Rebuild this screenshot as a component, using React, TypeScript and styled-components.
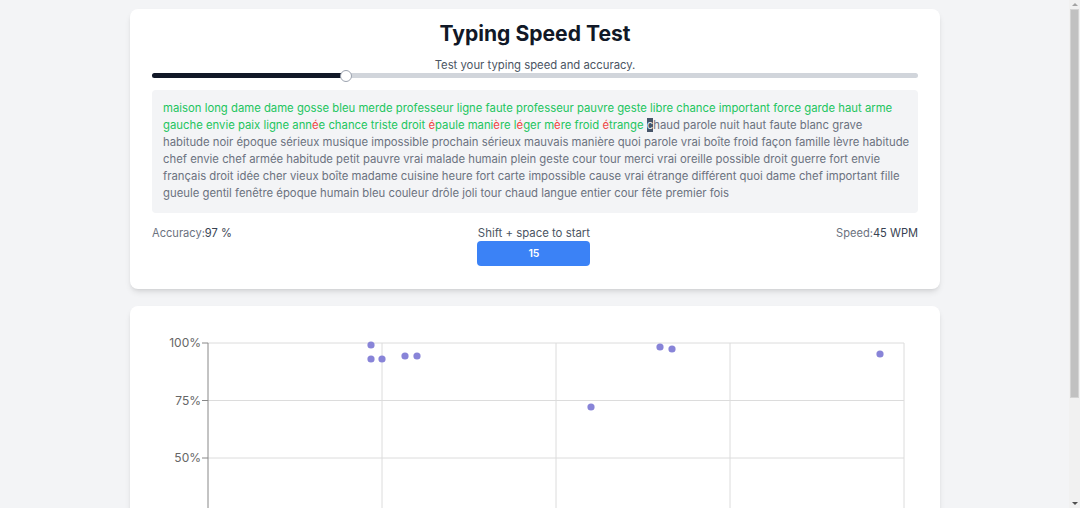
import React from 'react';
import styled, { createGlobalStyle } from 'styled-components';

const GlobalStyle = createGlobalStyle`
  html, body {
    margin: 0;
    padding: 0;
    background: #f3f4f6;
    font-family: Inter, "Liberation Sans", sans-serif;
  }
  ::-webkit-scrollbar {
    display: none;
  }
`;

const LINES = [
  'maison long dame dame gosse bleu merde professeur ligne faute professeur pauvre geste libre chance important force garde haut arme',
  'gauche envie paix ligne année chance triste droit épaule manière léger mère froid étrange chaud parole nuit haut faute blanc grave',
  'habitude noir époque sérieux musique impossible prochain sérieux mauvais manière quoi parole vrai boîte froid façon famille lèvre habitude',
  'chef envie chef armée habitude petit pauvre vrai malade humain plein geste cour tour merci vrai oreille possible droit guerre fort envie',
  'français droit idée cher vieux boîte madame cuisine heure fort carte impossible cause vrai étrange différent quoi dame chef important fille',
  'gueule gentil fenêtre époque humain bleu couleur drôle joli tour chaud langue entier cour fête premier fois',
];

// characters typed so far: everything up to "chaud" on line two
const TYPED = LINES[0].length + 1 + LINES[1].indexOf('chaud');
const ACCENTS = 'éèêàâçîôû';

const points = [
  { x: 371, y: 345 },
  { x: 371, y: 359 },
  { x: 382, y: 359 },
  { x: 405, y: 356 },
  { x: 417, y: 356 },
  { x: 591, y: 407 },
  { x: 660, y: 347 },
  { x: 672, y: 349 },
  { x: 880, y: 354 },
];

export default function App() {
  let offset = 0;
  return (
    <>
      <GlobalStyle />
      <Page>
        <Card>
          <Title>Typing Speed Test</Title>
          <Subtitle>Test your typing speed and accuracy.</Subtitle>
          <Track>
            <Fill style={{ width: '25.3%' }} />
            <Thumb style={{ left: '25.3%' }} />
          </Track>
          <TextBox>
            {LINES.map((line, li) => {
              const start = offset;
              offset += line.length + 1;
              return (
                <Line key={li}>
                  {line.split('').map((ch, ci) => {
                    const i = start + ci;
                    if (i === TYPED) return <Cursor key={ci}>{ch}</Cursor>;
                    const state = i < TYPED ? (ACCENTS.includes(ch) ? 'wrong' : 'right') : 'idle';
                    return (
                      <Char key={ci} $state={state}>
                        {ch}
                      </Char>
                    );
                  })}
                </Line>
              );
            })}
          </TextBox>
          <Stats>
            <Stat>
              Accuracy:<Value>97 %</Value>
            </Stat>
            <Center>
              <Hint>Shift + space to start</Hint>
              <TimerButton>15</TimerButton>
            </Center>
            <Stat>
              Speed:<Value>45 WPM</Value>
            </Stat>
          </Stats>
        </Card>
        <ChartCard>
          <Chart />
        </ChartCard>
      </Page>
      <Scrollbar>
        <ArrowUp />
        <ScrollThumb />
        <ArrowDown />
      </Scrollbar>
    </>
  );
}

function Chart() {
  // page coords of the plot, shifted into the svg's own box
  const ox = 152;
  const oy = 328;
  const left = 208 - ox;
  const right = 904 - ox;
  const top = 343 - oy;
  const step = 57.5;
  const bottom = top + step * 4;
  const cols = [382, 556, 730, 904].map((x) => x - ox);
  const rows = [0, 1, 2, 3].map((k) => top + k * step);
  const labels = ['100%', '75%', '50%', '25%'];
  const xLabels = ['0', '5', '10', '15', '20'];
  return (
    <svg width="766" height="282" viewBox="0 0 766 282">
      {rows.map((y) => (
        <line key={y} x1={left} x2={right} y1={y} y2={y} stroke="#dcdcdc" />
      ))}
      {cols.map((x) => (
        <line key={x} x1={x} x2={x} y1={top} y2={bottom} stroke="#dcdcdc" />
      ))}
      <line x1={left} x2={left} y1={top} y2={bottom} stroke="#888" />
      <line x1={left} x2={right} y1={bottom} y2={bottom} stroke="#888" />
      {rows.map((y, i) => (
        <g key={i}>
          <line x1={left - 6} x2={left} y1={y} y2={y} stroke="#888" />
          <text x={left - 7} y={y + 4} textAnchor="end" fontSize="12" fill="#666" fontFamily="Inter, sans-serif">
            {labels[i]}
          </text>
        </g>
      ))}
      {[left, ...cols].map((x, i) => (
        <g key={x}>
          <line x1={x} x2={x} y1={bottom} y2={bottom + 6} stroke="#888" />
          <text x={x} y={bottom + 20} textAnchor="middle" fontSize="12" fill="#666" fontFamily="Inter, sans-serif">
            {xLabels[i]}
          </text>
        </g>
      ))}
      {points.map((p, i) => (
        <circle key={i} cx={p.x - ox} cy={p.y - oy} r="3.6" fill="#8884d8" />
      ))}
    </svg>
  );
}

const Page = styled.div`
  padding: 9px 10px 9px 0;
  display: flex;
  flex-direction: column;
  align-items: center;
  gap: 17px;
`;

const Card = styled.div`
  width: 810px;
  box-sizing: border-box;
  background: #ffffff;
  border-radius: 8px;
  box-shadow: 0 4px 6px -1px rgba(0, 0, 0, 0.1), 0 2px 4px -2px rgba(0, 0, 0, 0.1);
  padding: 11px 22px 23px;
  display: flex;
  flex-direction: column;
`;

const ChartCard = styled(Card)`
  padding: 22px;
`;

const Title = styled.h1`
  margin: 0;
  font-size: 21.1px;
  line-height: 28px;
  font-weight: 700;
  color: #111827;
  text-align: center;
`;

const Subtitle = styled.p`
  margin: 10px 0 0;
  font-size: 11.3px;
  line-height: 14px;
  color: #4b5563;
  text-align: center;
`;

const Track = styled.div`
  position: relative;
  height: 5px;
  margin-top: 1px;
  border-radius: 3px;
  background: #d1d5db;
`;

const Fill = styled.div`
  height: 100%;
  border-radius: 3px;
  background: #111827;
`;

const Thumb = styled.div`
  position: absolute;
  top: 50%;
  width: 10px;
  height: 10px;
  margin: -6px 0 0 -6px;
  border-radius: 50%;
  background: #ffffff;
  border: 1px solid #9ca3af;
`;

const TextBox = styled.div`
  margin-top: 12px;
  padding: 10px 11px 11px;
  background: #f3f4f6;
  border-radius: 4px;
  font-size: 11.3px;
  line-height: 17px;
  color: #6b7280;
`;

const Line = styled.div`
  white-space: nowrap;
`;

const Char = styled.span<{ $state: 'right' | 'wrong' | 'idle' }>`
  color: ${(p) => (p.$state === 'right' ? '#22c55e' : p.$state === 'wrong' ? '#ef4444' : '#6b7280')};
`;

const Cursor = styled.span`
  background: #475569;
  color: #e2e8f0;
`;

const Stats = styled.div`
  margin-top: 12px;
  display: flex;
  justify-content: space-between;
  align-items: flex-start;
  font-size: 11.1px;
  line-height: 16px;
`;

const Stat = styled.div`
  color: #6b7280;
`;

const Value = styled.span`
  color: #374151;
`;

const Center = styled.div`
  display: flex;
  flex-direction: column;
  align-items: center;
`;

const Hint = styled.div`
  color: #4b5563;
  font-size: 11.4px;
`;

const TimerButton = styled.button`
  width: 113px;
  height: 25px;
  border: none;
  border-radius: 4px;
  background: #3b82f6;
  color: #ffffff;
  font-family: inherit;
  font-size: 10.5px;
  font-weight: 600;
`;

const Scrollbar = styled.div`
  position: fixed;
  top: 0;
  right: 0;
  bottom: 0;
  width: 11px;
  background: #f1f1f1;
  display: flex;
  flex-direction: column;
  align-items: center;
`;

const ArrowUp = styled.div`
  margin-top: 3px;
  width: 0;
  height: 0;
  border-left: 3px solid transparent;
  border-right: 3px solid transparent;
  border-bottom: 3px solid #a3a3a3;
`;

const ScrollThumb = styled.div`
  margin-top: 3px;
  width: 9px;
  height: 389px;
  background: #c1c1c1;
  border: 1px solid #d4d4d4;
  box-sizing: border-box;
`;

const ArrowDown = styled.div`
  margin-top: auto;
  margin-bottom: 3px;
  width: 0;
  height: 0;
  border-left: 3px solid transparent;
  border-right: 3px solid transparent;
  border-top: 3px solid #505050;
`;
